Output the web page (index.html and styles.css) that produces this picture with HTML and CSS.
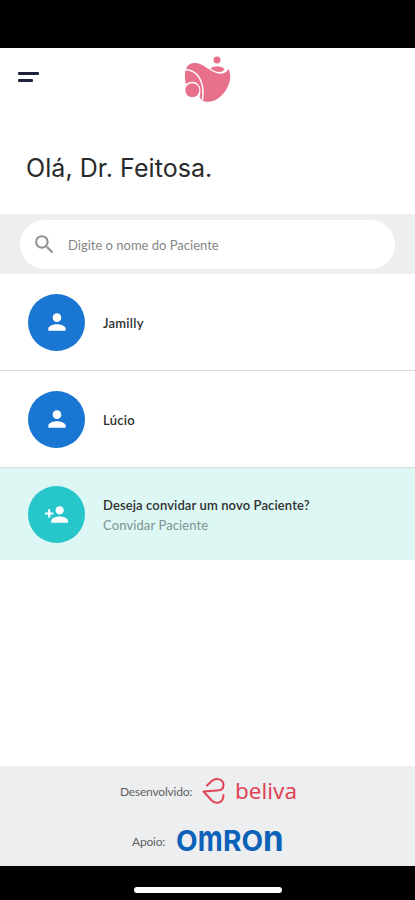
FILE: index.html
```html
<!DOCTYPE html>
<html lang="pt-BR">
  <head>
    <meta charset="utf-8" />
    <meta name="viewport" content="width=device-width, initial-scale=1" />
    <title>Pacientes</title>
    <link rel="stylesheet" href="styles.css">
  </head>

  <body>
    <div class="statusBar"></div>

    <header class="header">
      <div class="menu">
        <span class="menuLine"></span>
        <span class="menuLine short"></span>
      </div>
      <svg class="logo" width="48" height="48" viewBox="0 0 48 48">
        <g fill="#e8708a">
          <circle cx="33" cy="5" r="3.500" />
          <path d="M2.500 12.500C5 8.500 8 7.500 12 8C19 9 25 15 31 17.500C37 20 42 18.500 44.500 14C47.500 20 46.500 28 42 35C37 43 29 48 21 46.500C19 46 17 45 16 43L8 32L1.500 28C.5 23 .5 17 2.500 12.500Z" />
          <path d="M26.500 13.500C30 10.500 37 10.500 40.500 14C39 18.500 31 17.500 26.500 13.500Z" />
        </g>
        <path d="M1 14.500C14 15 21 27 18.500 45" fill="none" stroke="#fff" stroke-width="1.500" />
        <circle cx="8.300" cy="35.300" r="8.500" fill="#fff" />
        <path d="M8 42L17 38L16 43.500L10 46Z" fill="#fff" />
        <path d="M14.500 28.500C17.500 32 18 37 16 42" fill="none" stroke="#e8708a" stroke-width="1.200" />
        <circle cx="8.300" cy="35.300" r="7" fill="#e8708a" />
      </svg>
    </header>

    <h1 class="greeting">Olá, Dr. Feitosa.</h1>

    <div class="search">
      <div class="searchBox">
        <svg width="25" height="25" viewBox="0 0 24 24" fill="#929292">
          <path d="M15.500 14h-.79l-.28-.27A6.470 6.470 0 0 0 16 9.500 6.500 6.500 0 1 0 9.500 16c1.610 0 3.090-.59 4.230-1.570l.27.28v.79l5 4.990L20.490 19l-4.990-5zm-6 0C7.010 14 5 11.990 5 9.500S7.010 5 9.500 5 14 7.010 14 9.500 11.990 14 9.500 14z" />
        </svg>
        <span class="placeholder">Digite o nome do Paciente</span>
      </div>
    </div>

    <main class="list">
      <div class="row">
        <div class="avatar">
          <svg width="26" height="26" viewBox="0 0 24 24" fill="#fff">
            <path d="M12 12c2.210 0 4-1.790 4-4s-1.790-4-4-4-4 1.790-4 4 1.790 4 4 4zm0 2c-2.670 0-8 1.340-8 4v2h16v-2c0-2.660-5.330-4-8-4z" />
          </svg>
        </div>
        <p class="name">Jamilly</p>
      </div>
      <div class="row">
        <div class="avatar">
          <svg width="26" height="26" viewBox="0 0 24 24" fill="#fff">
            <path d="M12 12c2.210 0 4-1.790 4-4s-1.790-4-4-4-4 1.790-4 4 1.790 4 4 4zm0 2c-2.670 0-8 1.340-8 4v2h16v-2c0-2.660-5.330-4-8-4z" />
          </svg>
        </div>
        <p class="name">Lúcio</p>
      </div>
      <div class="row invite">
        <div class="avatar">
          <svg width="25" height="25" viewBox="0 0 24 24" fill="#fff">
            <path d="M15 12c2.210 0 4-1.790 4-4s-1.790-4-4-4-4 1.790-4 4 1.790 4 4 4zm-9-2V7H4v3H1v2h3v3h2v-3h3v-2H6zm9 4c-2.670 0-8 1.340-8 4v2h16v-2c0-2.660-5.330-4-8-4z" />
          </svg>
        </div>
        <div>
          <p class="name question">Deseja convidar um novo Paciente?</p>
          <p class="action">Convidar Paciente</p>
        </div>
      </div>
    </main>

    <footer class="footer">
      <div class="credit made">
        <span class="label">Desenvolvido:</span>
        <svg width="24" height="30" viewBox="0 0 24 30" fill="none" stroke="#e04455" stroke-width="2" stroke-linejoin="round" stroke-linecap="round">
          <path d="M5 9.500L10 4.800C14.500 1 21.500 3.500 21.500 9C21.500 12.500 19 14.500 15 14.500L1.500 15.500L9.500 24.200C14 29 21.500 27 21.500 19" />
        </svg>
        <svg class="beliva" width="64" height="30">
          <text x="0" y="22.500" textLength="62" lengthAdjust="spacingAndGlyphs">beliva</text>
        </svg>
      </div>
      <div class="credit support">
        <span class="label">Apoio:</span>
        <svg class="omron" width="108" height="30">
          <text transform="translate(-1 25)">O</text>
          <text class="round" transform="translate(20.800 25) scale(.77 1)">M</text>
          <text transform="translate(46 25)">R</text>
          <text transform="translate(64.500 25)">O</text>
          <text class="round" transform="translate(86 25) scale(.93 1)">N</text>
        </svg>
      </div>
    </footer>

    <div class="homeBar">
      <span class="homeLine"></span>
    </div>
  </body>
</html>
```
FILE: styles.css
```css
* {
    box-sizing: border-box;
}

body {
    display: flex;
    flex-direction: column;
    height: 900px;
    margin: 0;
    background-color: white;
    font-family: Lato, sans-serif;
}

p, h1 {
    margin: 0;
}

svg {
    display: block;
    flex-shrink: 0;
}

.statusBar {
    height: 48px;
    background-color: black;
}

.header {
    display: flex;
    align-items: flex-start;
    height: 92px;
    padding: 7px 18px;
}

.menu {
    display: flex;
    flex-direction: column;
    gap: 4px;
    width: 166px;
    padding-top: 17px;
}

.menuLine {
    width: 21px;
    height: 3px;
    border-radius: 1px;
    background-color: #20233f;
}

.short {
    width: 15px;
}

.greeting {
    height: 74px;
    padding-left: 26px;
    font: 400 25px/56px Inter, sans-serif;
    letter-spacing: 0.060px;
    color: #2a2a2a;
}

.search {
    height: 60px;
    padding: 6px 20px 5px;
    background-color: #eceef0;
}

.searchBox {
    display: flex;
    align-items: center;
    gap: 11px;
    height: 49px;
    padding-left: 12px;
    border-radius: 25px;
    background-color: white;
}

.placeholder {
    font-size: 13px;
    color: #858585;
}

.row {
    display: flex;
    align-items: center;
    gap: 18px;
    height: 97px;
    padding-left: 28px;
    border-bottom: 1px solid #dcdcdc;
}

.avatar {
    display: flex;
    align-items: center;
    justify-content: center;
    width: 57px;
    height: 57px;
    border-radius: 50%;
    background-color: #1976d2;
}

.name {
    padding-top: 1px;
    font-size: 13px;
    font-weight: 600;
    line-height: 20px;
    letter-spacing: 0.250px;
    color: #303030;
}

.question {
    letter-spacing: 0.120px;
}

.invite {
    height: 92px;
    border-bottom: none;
    background-color: #dcf7f4;
}

.invite .avatar {
    background-color: #26c6ca;
}

.action {
    font-size: 13px;
    line-height: 20px;
    letter-spacing: 0.120px;
    color: #7f9290;
}

.footer {
    height: 100px;
    margin-top: auto;
    background-color: #eceef0;
}

.credit {
    display: flex;
    align-items: center;
    height: 50px;
}

.made {
    padding-left: 120px;
}

.support {
    padding-left: 132px;
}

.label {
    font-size: 12px;
    letter-spacing: -0.200px;
    color: #626262;
}

.made .label {
    width: 82px;
}

.support .label {
    width: 45px;
}

.beliva {
    margin-left: 9px;
    font: 400 22px "Noto Sans", sans-serif;
    fill: #e04455;
}

.omron {
    overflow: visible;
    font: 700 28px Inter, sans-serif;
    fill: #0b62b8;
}

/* the M and N of the wordmark are round letters at cap height */
.round {
    font-size: 35.500px;
    text-transform: lowercase;
}

.homeBar {
    display: flex;
    justify-content: center;
    height: 34px;
    padding-top: 21px;
    background-color: black;
}

.homeLine {
    width: 148px;
    height: 6px;
    border-radius: 3px;
    background-color: white;
}
```
